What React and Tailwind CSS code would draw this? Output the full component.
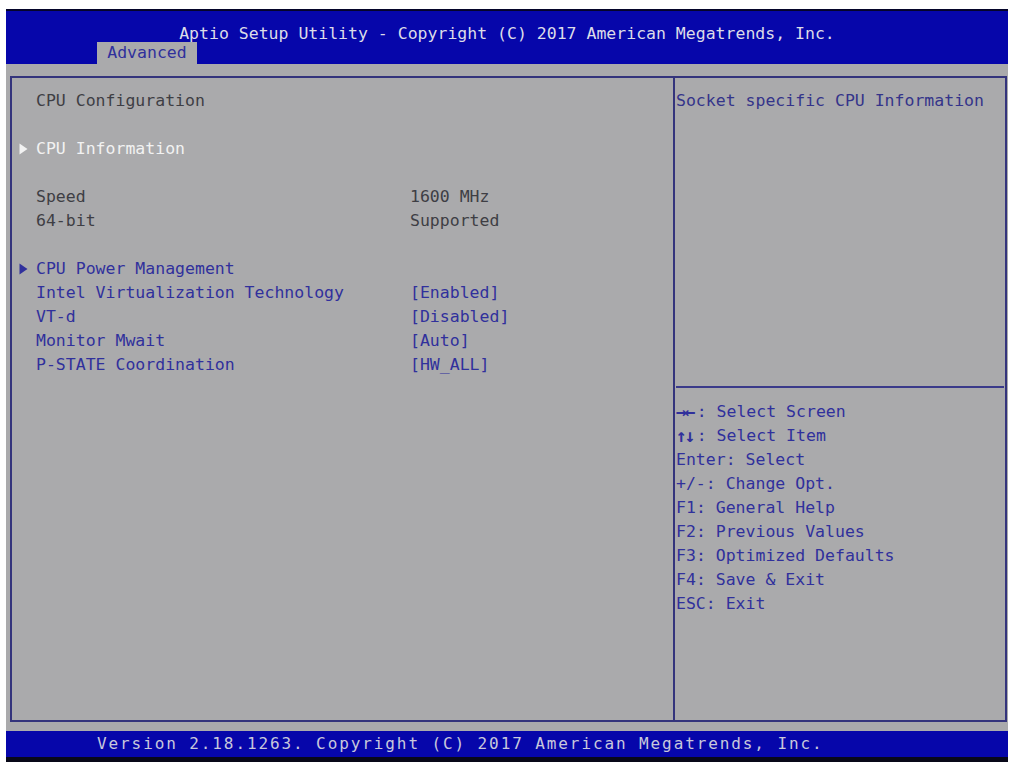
import React from "react";

const MONO = { fontFamily: '"DejaVu Sans Mono", "Liberation Mono", monospace' };

// left column rows, 24px each; null = blank line
const ROWS = [
  { label: "CPU Configuration", kind: "text" },
  null,
  { label: "CPU Information", kind: "sub", active: true },
  null,
  { label: "Speed", value: "1600 MHz", kind: "text" },
  { label: "64-bit", value: "Supported", kind: "text" },
  null,
  { label: "CPU Power Management", kind: "sub" },
  { label: "Intel Virtualization Technology", value: "[Enabled]", kind: "opt" },
  { label: "VT-d", value: "[Disabled]", kind: "opt" },
  { label: "Monitor Mwait", value: "[Auto]", kind: "opt" },
  { label: "P-STATE Coordination", value: "[HW_ALL]", kind: "opt" },
];

const HELP = [
  ["→←", ": Select Screen", true],
  ["↑↓", ": Select Item", true],
  ["Enter", ": Select"],
  ["+/-", ": Change Opt."],
  ["F1", ": General Help"],
  ["F2", ": Previous Values"],
  ["F3", ": Optimized Defaults"],
  ["F4", ": Save & Exit"],
  ["ESC", ": Exit"],
];

function Arrow({ color }) {
  return (
    <svg width="9" height="12" viewBox="0 0 9 12" className="shrink-0">
      <path d="M0.5 0.5 L8.5 6 L0.5 11.5 Z" fill={color} />
    </svg>
  );
}

function Row({ row }) {
  if (!row) return <div className="h-[24px]" />;
  const color =
    row.active ? "text-[#f2f2f2]" : row.kind === "text" ? "text-[#3e3e44]" : "text-[#30309c]";
  return (
    <div className={`h-[24px] flex items-center ${color}`}>
      <div className="w-[24px] pl-[7px] flex items-center">
        {row.kind === "sub" && <Arrow color={row.active ? "#f2f2f2" : "#30309c"} />}
      </div>
      <div className="w-[374px] whitespace-pre">{row.label}</div>
      {row.value && (
        <div className={`whitespace-pre ${row.kind === "text" ? "text-[#3e3e44]" : "text-[#30309c]"}`}>
          {row.value}
        </div>
      )}
    </div>
  );
}

export default function App() {
  return (
    <div
      className="w-[1010px] h-[762px] bg-white pl-[6px] pt-[9px] pr-[2px] flex flex-col text-[16.5px] leading-none"
      style={MONO}
    >
      {/* header */}
      <div className="h-[55px] bg-[#0606aa] border-t-2 border-[#05052a] flex flex-col">
        <div className="h-[31px] flex items-end justify-center text-[#dcdce8] whitespace-pre">
          Aptio Setup Utility - Copyright (C) 2017 American Megatrends, Inc.
        </div>
        <div className="flex-1 flex items-end pl-[91px]">
          <div className="w-[100px] h-[22px] bg-[#aaaaac] text-[#30309c] flex items-center justify-center">
            Advanced
          </div>
        </div>
      </div>

      {/* body */}
      <div className="flex-1 bg-[#aaaaac] pt-[12px] pb-[9px] pl-[4px] pr-[1px] flex">
        <div className="flex-1 flex border-2 border-[#34347c]">
          <div className="w-[663px] border-r-2 border-[#34347c] pt-[11px]">
            {ROWS.map((r, i) => (
              <Row key={i} row={r} />
            ))}
          </div>
          <div className="flex-1 flex flex-col pt-[11px]">
            <div className="h-[24px] flex items-center pl-[1px] text-[#34348a] whitespace-pre">
              Socket specific CPU Information
            </div>
            <div className="h-[273px]" />
            <div className="mx-[1px] h-[2px] bg-[#3a3a8a]" />
            <div className="pt-[12px]">
              {HELP.map(([k, t, arrows], i) => (
                <div key={i} className="h-[24px] flex items-center pl-[1px] text-[#30309c] whitespace-pre">
                  <span className={arrows ? "tracking-[-2px] font-bold text-[18px]" : ""}>{k}</span>
                  {arrows && <span className="w-[3px]" />}
                  <span>{t}</span>
                </div>
              ))}
            </div>
          </div>
        </div>
      </div>

      {/* footer */}
      <div className="h-[26px] bg-[#0606aa] flex items-center pl-[91px]">
        <span className="text-[#c8c8dc] text-[16px] tracking-[1.9px] whitespace-pre">
          Version 2.18.1263. Copyright (C) 2017 American Megatrends, Inc.
        </span>
      </div>
      <div className="h-[5px] bg-[#080818]" />
    </div>
  );
}
